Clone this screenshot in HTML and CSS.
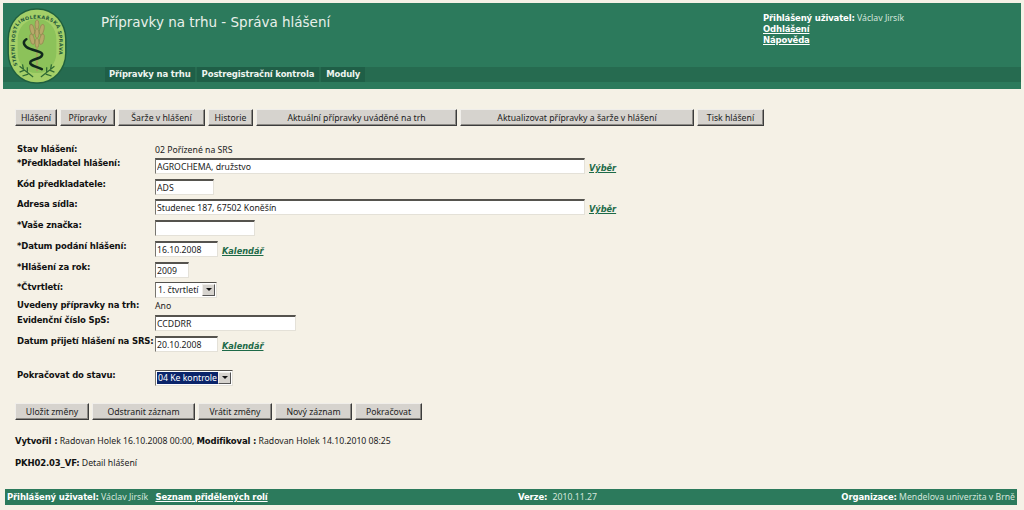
FILE: index.html
```html
<!DOCTYPE html>
<html lang="cs">
<head>
  <meta charset="UTF-8"/>
  <title>Přípravky na trhu - Správa hlášení</title>
  <link rel="stylesheet" href="styles.css">
</head>
<body>
<!-- Header -->
<header class="top">
  <svg class="logo" viewBox="0 0 62 80" width="60" height="78">
    <defs>
      <path id="arc" d="M11 60 C7 50 7 30 11 20 C16 9 46 9 51 20 C55 30 55 50 51 60"/>
    </defs>
    <rect x="0.5" y="1" width="61" height="78" rx="30" ry="32" fill="#1f5f3e"/>
    <rect x="2" y="2.5" width="58" height="75" rx="28" ry="30" fill="#a4cf68"/>
    <rect x="11" y="12" width="40" height="56" rx="19" ry="21" fill="#8cc25a"/>
    <text class="logo-text"><textPath href="#arc">STÁTNÍ ROSTLINOLÉKAŘSKÁ SPRÁVA</textPath></text>
    <g fill="#b9a86a" stroke="#8a7f4c" stroke-width=".6">
      <ellipse cx="31" cy="18" rx="2" ry="5"/>
      <ellipse cx="26" cy="23" rx="2.2" ry="5.5" transform="rotate(-12 26 23)"/>
      <ellipse cx="36" cy="23" rx="2.2" ry="5.5" transform="rotate(12 36 23)"/>
      <ellipse cx="26" cy="33" rx="2.2" ry="5.5" transform="rotate(-12 26 33)"/>
      <ellipse cx="36" cy="33" rx="2.2" ry="5.5" transform="rotate(12 36 33)"/>
      <ellipse cx="31" cy="27" rx="2" ry="5"/>
      <ellipse cx="31" cy="37" rx="2" ry="5"/>
    </g>
    <path d="M31 40V66" stroke="#a8a060" stroke-width="1.5"/>
    <path d="M20 33 C15 36 18 41 24 43 C32 46 38 46 36 50 C34 54 25 53 24 57 C23 60 30 61 36 64" fill="none" stroke="#10281c" stroke-width="2.6" stroke-linecap="round"/>
    <g fill="none" stroke="#2f6a34" stroke-width="1.3">
      <path d="M27 72 L13 61 M17 64 L16 59 M21 67 L21 62 M18 65 L13 67 M22 69 L16 71"/>
      <path d="M35 72 L49 61 M45 64 L46 59 M41 67 L41 62 M44 65 L49 67 M40 69 L46 71"/>
    </g>
  </svg>
  <div class="top-main">
    <h1>Přípravky na trhu - Správa hlášení</h1>
    <nav class="menu">
      <a class="menu-item current">Přípravky na trhu</a>
      <a class="menu-item">Postregistrační kontrola</a>
      <a class="menu-item">Moduly</a>
    </nav>
  </div>
  <div class="top-user">
    <div><b>Přihlášený uživatel:</b> <span class="thin">Václav Jirsík</span></div>
    <div><a>Odhlášení</a></div>
    <div><a>Nápověda</a></div>
  </div>
</header>

<!-- Tabs -->
<div class="btn-row tabs">
  <button class="w42">Hlášení</button>
  <button class="w55">Přípravky</button>
  <button class="w87">Šarže v hlášení</button>
  <button class="w45">Historie</button>
  <button class="w201">Aktuální přípravky uváděné na trh</button>
  <button class="w234">Aktualizovat přípravky a šarže v hlášení</button>
  <button class="w67">Tisk hlášení</button>
</div>

<!-- Form -->
<form class="detail">
  <div class="row r14"><label>Stav hlášení:</label><span>02 Pořízené na SRS</span></div>
  <div class="row r21"><label>*Předkladatel hlášení:</label><input class="i430" value="AGROCHEMA, družstvo"><a class="link">Výběr</a></div>
  <div class="row r20"><label>Kód předkladatele:</label><input class="i59" value="ADS"></div>
  <div class="row r21"><label>Adresa sídla:</label><input class="i430" value="Studenec 187, 67502 Koněšín"><a class="link">Výběr</a></div>
  <div class="row r21"><label>*Vaše značka:</label><input class="i100"></div>
  <div class="row r21"><label>*Datum podání hlášení:</label><input class="i63" value="16.10.2008"><a class="link">Kalendář</a></div>
  <div class="row r20"><label>*Hlášení za rok:</label><input class="i34" value="2009"></div>
  <div class="row r18"><label>*Čtvrtletí:</label><span class="select s61"><span class="sel-text">1. čtvrtletí</span><i class="arrow"></i></span></div>
  <div class="row r15"><label>Uvedeny přípravky na trh:</label><span>Ano</span></div>
  <div class="row r21"><label>Evidenční číslo SpS:</label><input class="i141" value="CCDDRR"></div>
  <div class="row r21"><label>Datum přijetí hlášení na SRS:</label><input class="i63" value="20.10.2008"><a class="link">Kalendář</a></div>
  <div class="row r21 last"><label>Pokračovat do stavu:</label><span class="select s77"><span class="sel-text picked">04 Ke kontrole</span><i class="arrow"></i></span></div>
</form>

<div class="btn-row actions">
  <button class="w74">Uložit změny</button>
  <button class="w103">Odstranit záznam</button>
  <button class="w74">Vrátit změny</button>
  <button class="w77">Nový záznam</button>
  <button class="w67">Pokračovat</button>
</div>

<p class="info"><b>Vytvořil :</b> Radovan Holek 16.10.2008 00:00, <b>Modifikoval :</b> Radovan Holek 14.10.2010 08:25</p>
<p class="info screen"><b>PKH02.03_VF:</b> Detail hlášení</p>

<!-- Footer -->
<footer class="bottom-bar">
  <div class="foot-left"><b>Přihlášený uživatel:</b> <span class="thin">Václav Jirsík</span> <a>Seznam přidělených rolí</a></div>
  <div class="foot-mid"><b>Verze:</b> <span class="thin ver">2010.11.27</span></div>
  <div class="foot-right"><b>Organizace:</b> <span class="thin">Mendelova univerzita v Brně</span></div>
</footer>
</body>
</html>
```

FILE: styles.css
```css
:root{
  --bg:#f5f1e6;
  --green:#2c7a5c;
  --green-dark:#266b50;
  --btn:#d6d3ce;
  --bold:"DejaVu Sans",Verdana,sans-serif;
  --thin:"Noto Sans",Tahoma,sans-serif;
}
*{box-sizing:border-box}
body{margin:0;padding:3px 3px 0;background:var(--bg);color:#222;font:8.7px/12px var(--thin);height:510px;overflow:hidden}
b,label{font:bold 8.5px/12px var(--bold);color:#111;letter-spacing:-.15px}

/* header */
.top{position:relative;display:flex;height:86px;background:var(--green);color:#fff}
.top::after{content:"";position:absolute;left:0;right:0;top:64px;height:15px;background:var(--green-dark)}
.logo{flex:none;margin:4px 0 0 4px;position:relative;z-index:1}
.logo-text{font:bold 5px var(--bold);fill:#24583a;letter-spacing:.4px}
.top-main{flex:1;padding:10px 0 0 34px;position:relative;z-index:1}
h1{margin:0;height:54px;font:normal 13.5px/18px var(--bold);color:#e8f0ea}
.menu{display:flex;gap:2px;height:15px;margin-left:4px}
.menu-item{padding:0 5px;font:bold 8.5px/15px var(--bold);color:#eef4ef;background:#1f5f47;letter-spacing:-.15px}
.menu-item.current{padding:0 4px}
.top-user{width:258px;padding-top:10px;position:relative;z-index:1}
.top-user div{height:11px;line-height:11px}
.top-user b{color:#fff;line-height:11px}
.top-user a{font:bold 8.5px/11px var(--bold);color:#fff;text-decoration:underline;letter-spacing:-.15px}
.thin{color:#d5e6dc}

/* buttons */
.btn-row{display:flex;gap:3px;margin-left:12px}
.tabs{margin-top:20px}
.actions{margin-top:12px}
button{height:17px;padding:0;background:var(--btn);border:1px solid;border-color:#f0eeea #3c3c3c #3c3c3c #f0eeea;box-shadow:inset -1px -1px 0 #8c8a85;font:8.7px/12px var(--thin);color:#222}
.w42{width:42px}.w55{width:55px}.w87{width:87px}.w45{width:45px}.w201{width:201px}.w234{width:234px}
.w67{width:67px}.w74{width:74px}.w103{width:103px}.w77{width:77px}

/* form */
.detail{margin:18px 0 0 14px}
.row{display:flex;align-items:flex-start}
.row label{flex:none;width:138px;margin-top:-1px;white-space:nowrap}
.row input{height:16px;margin:0;padding:1px 0 0 1px;background:#fff;border:1px solid;border-color:#55534e #e4e1d8 #e4e1d8 #77756f;border-top-width:2px;font:8.7px/12px var(--thin);color:#222;outline:none}
.r14{height:14px}.r15{height:15px}.r18{height:18px}.r20{height:20px}.r21{height:21px}
.row.last{margin-top:13px}
.i430{width:430px}.i59{width:59px}.i100{width:100px}.i63{width:63px}.i34{width:34px}.i141{width:141px}
.link{margin:4px 0 0 4px;font:italic bold 8.2px/12px var(--bold);color:#1d6a48;text-decoration:underline}
.select{display:inline-flex;align-items:center;justify-content:space-between;height:16px;padding:1px;background:#fff;border:1px solid;border-color:#55534e #e4e1d8 #e4e1d8 #77756f}
.s61{width:62px}.s77{width:78px}
.sel-text{padding:0 1px;line-height:12px;white-space:nowrap}
.sel-text.picked{background:#0a246a;color:#fff;padding:0 1px}
.arrow{position:relative;flex:none;width:13px;height:12px;background:var(--btn);border:1px solid;border-color:#f0eeea #555 #555 #f0eeea}
.arrow::after{content:"";position:absolute;left:3px;top:3px;border:3px solid transparent;border-top-color:#111;border-bottom:0}

/* info lines */
.info{margin:15px 0 0 12px;line-height:12px;color:#222}
.info.screen{margin-top:10px}

/* footer */
.bottom-bar{position:absolute;left:5px;right:7px;top:489px;height:16px;display:flex;align-items:center;background:var(--green);color:#fff;padding:0 2px}
.bottom-bar b{color:#fff}
.foot-left{width:511px}
.foot-left a{margin-left:5px;font:bold 8.5px/12px var(--bold);color:#fff;text-decoration:underline;letter-spacing:-.15px}
.foot-mid{flex:1}
.foot-right{white-space:nowrap}
.ver{margin-left:3px}
```
